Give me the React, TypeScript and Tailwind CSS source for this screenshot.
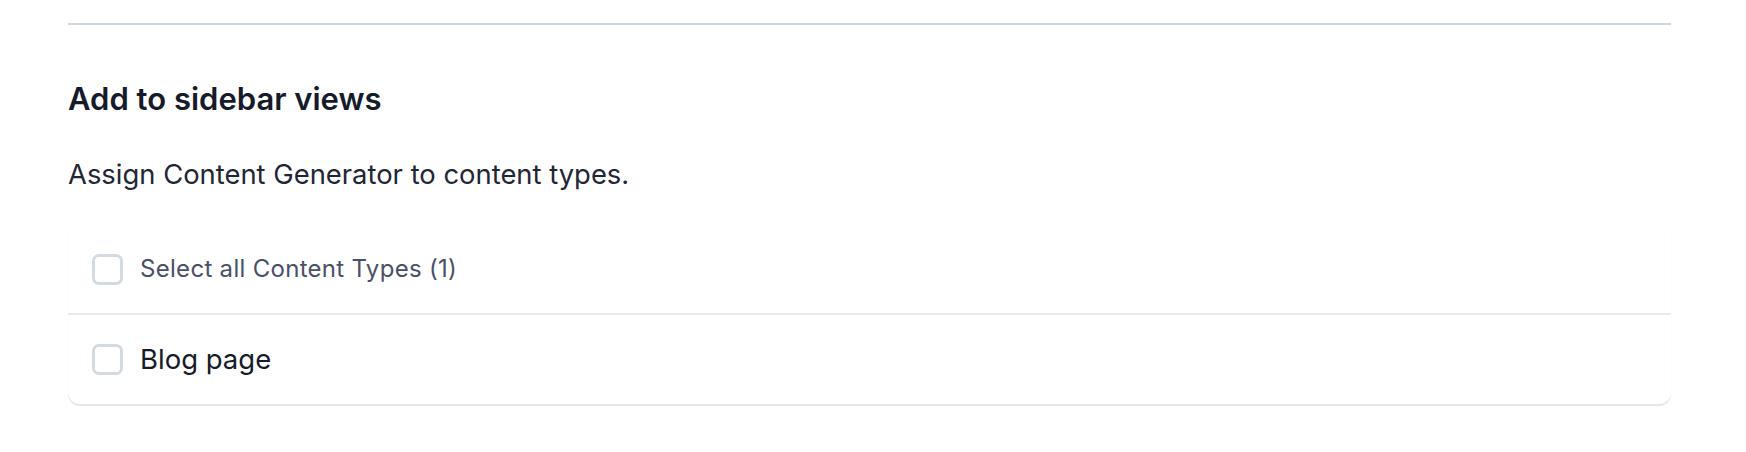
import React, { useState } from 'react';

interface ContentType {
  uid: string;
  name: string;
}

const contentTypes: ContentType[] = [{ uid: 'api::blog-page.blog-page', name: 'Blog page' }];

const Box: React.FC<{ checked: boolean; onChange: () => void }> = ({ checked, onChange }) => (
  <button
    type="button"
    onClick={onChange}
    className={`w-[31px] h-[31px] shrink-0 rounded-[7px] border-[3px] ${checked ? 'bg-[#4945ff] border-[#4945ff]' : 'bg-white border-[#d3dae1]'}`}
  />
);

const App: React.FC = () => {
  const [selected, setSelected] = useState<string[]>([]);
  const allSelected = selected.length === contentTypes.length;

  const toggle = (uid: string) => {
    setSelected(prev => (prev.includes(uid) ? prev.filter(u => u !== uid) : [...prev, uid]));
  };

  return (
    <div className="min-h-[452px] bg-white pt-[23px] pl-[68px] pr-[75px] font-['Inter',sans-serif]">
      <div className="h-[2px] bg-[#cfd8e1]" />
      <h2 className="mt-[54px] text-[31px] leading-[40px] font-semibold text-[#151b2b]">Add to sidebar views</h2>
      <p className="mt-[37px] text-[27.4px] leading-[36px] text-[#1f2636]">Assign Content Generator to content types.</p>
      <div className="mt-[33px] rounded-b-[12px] shadow-[0_1.5px_1px_rgba(0,0,0,0.1)]">
        <div className="h-[90px] flex items-center gap-[17px] pl-[24px] border-b-2 border-[#eaeaee]">
          <Box checked={allSelected} onChange={() => setSelected(allSelected ? [] : contentTypes.map(c => c.uid))} />
          <span className="text-[24px] text-[#4a5068] tracking-[0.3px]">
            Select all Content Types ({contentTypes.length})
          </span>
        </div>
        {contentTypes.map(ct => (
          <div key={ct.uid} className="h-[89px] flex items-center gap-[17px] pl-[24px]">
            <Box checked={selected.includes(ct.uid)} onChange={() => toggle(ct.uid)} />
            <span className="text-[27.5px] text-[#151b2b]">{ct.name}</span>
          </div>
        ))}
      </div>
    </div>
  );
};

export default App;
